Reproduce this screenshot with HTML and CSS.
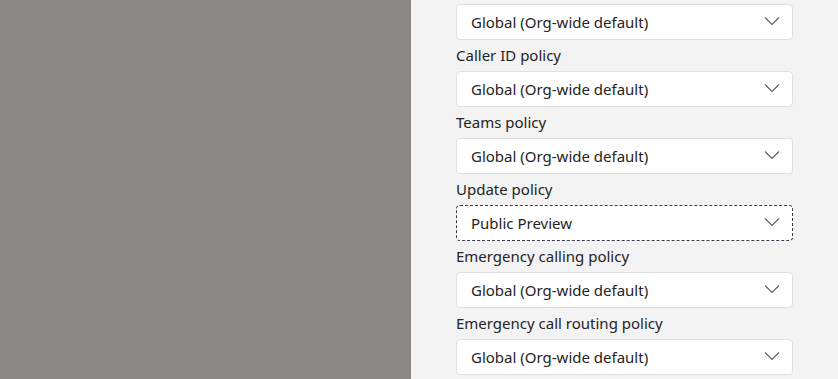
FILE: index.html
```html
<!DOCTYPE html>
<html lang="en">
<head>
    <meta charset="UTF-8">
    <title>Edit policies</title>
    <link rel="stylesheet" href="styles.css">
</head>
<body>
    <div class="overlay"></div>

    <div class="panel">
        <div class="dropdown">
            <span>Global (Org-wide default)</span>
            <svg class="chevron" width="16" height="8" viewBox="0 0 16 8"><path d="M1 0.5 L8 7.5 L15 0.5" fill="none" stroke="#605e5c" stroke-width="1.1"/></svg>
        </div>

        <label class="field-label">Caller ID policy</label>
        <div class="dropdown">
            <span>Global (Org-wide default)</span>
            <svg class="chevron" width="16" height="8" viewBox="0 0 16 8"><path d="M1 0.5 L8 7.5 L15 0.5" fill="none" stroke="#605e5c" stroke-width="1.1"/></svg>
        </div>

        <label class="field-label">Teams policy</label>
        <div class="dropdown">
            <span>Global (Org-wide default)</span>
            <svg class="chevron" width="16" height="8" viewBox="0 0 16 8"><path d="M1 0.5 L8 7.5 L15 0.5" fill="none" stroke="#605e5c" stroke-width="1.1"/></svg>
        </div>

        <label class="field-label">Update policy</label>
        <div class="dropdown focused">
            <span>Public Preview</span>
            <svg class="chevron" width="16" height="8" viewBox="0 0 16 8"><path d="M1 0.5 L8 7.5 L15 0.5" fill="none" stroke="#605e5c" stroke-width="1.1"/></svg>
        </div>

        <label class="field-label">Emergency calling policy</label>
        <div class="dropdown">
            <span>Global (Org-wide default)</span>
            <svg class="chevron" width="16" height="8" viewBox="0 0 16 8"><path d="M1 0.5 L8 7.5 L15 0.5" fill="none" stroke="#605e5c" stroke-width="1.1"/></svg>
        </div>

        <label class="field-label">Emergency call routing policy</label>
        <div class="dropdown">
            <span>Global (Org-wide default)</span>
            <svg class="chevron" width="16" height="8" viewBox="0 0 16 8"><path d="M1 0.5 L8 7.5 L15 0.5" fill="none" stroke="#605e5c" stroke-width="1.1"/></svg>
        </div>
    </div>
</body>
</html>
```

FILE: styles.css
```css
body {
    margin: 0;
    display: flex;
    height: 379px;
    overflow: hidden;
    font-family: "Noto Sans", "Open Sans", sans-serif;
    font-size: 15px;
    color: #252423;
}
.overlay {
    flex: 0 0 411px;
    background-color: #8a8987;
}
.panel {
    flex: 1;
    background-color: #f3f3f3;
    padding: 4px 45px 0 45px;
    display: flex;
    flex-direction: column;
}
.field-label {
    display: block;
    line-height: 21px;
    padding: 5px 0;
}
.dropdown {
    flex: 0 0 36px;
    box-sizing: border-box;
    display: flex;
    align-items: center;
    justify-content: space-between;
    background-color: #fff;
    border: 1px solid #e0e0e0;
    border-radius: 4px;
    padding: 0 12px 0 14px;
}
.dropdown.focused {
    border: 1px dashed #3b3a48;
}
.chevron {
    margin-top: -3px;
}
```
